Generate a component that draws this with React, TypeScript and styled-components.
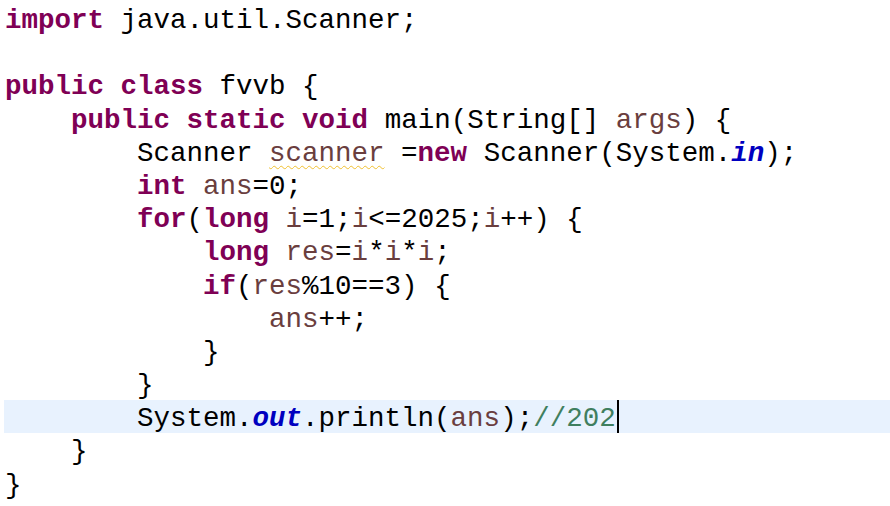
import React from "react";
import styled, { createGlobalStyle } from "styled-components";

const Global = createGlobalStyle`
  html, body { margin: 0; padding: 0; background: #ffffff; }
  body { width: 890px; height: 506px; overflow: hidden; }
`;

const Editor = styled.div`
  width: 890px;
  height: 506px;
  background: #ffffff;
  padding: 2px 0 0 4px;
  box-sizing: border-box;
  font-family: "Liberation Mono", "Courier New", monospace;
  font-size: 27.5px;
  color: #000000;
`;

const Line = styled.div<{ $current?: boolean }>`
  height: 33.2px;
  box-sizing: border-box;
  padding: 2px 0 0 1px;
  line-height: 33.2px;
  white-space: pre;
  background: ${(p) => (p.$current ? "#e8f2fe" : "transparent")};
`;

const Kw = styled.span`
  color: #7f0055;
  font-weight: bold;
`;

const Local = styled.span`
  color: #6a3e3e;
`;

const Field = styled.span`
  color: #0000c0;
  font-weight: bold;
  font-style: italic;
`;

const Comment = styled.span`
  color: #3f7f5f;
`;

const Warn = styled.span`
  color: #6a3e3e;
  text-decoration: underline wavy #f0c030;
  text-decoration-thickness: 1px;
  text-underline-offset: 4px;
`;

const Caret = styled.span`
  display: inline-block;
  position: relative;
  top: -2px;
  left: 1px;
  width: 2px;
  height: 33px;
  background: #000000;
  vertical-align: top;
`;

export default function App() {
  return (
    <>
      <Global />
      <Editor>
        <Line>
          <Kw>import</Kw> java.util.Scanner;
        </Line>
        <Line />
        <Line>
          <Kw>public</Kw> <Kw>class</Kw> fvvb {"{"}
        </Line>
        <Line>
          {"    "}
          <Kw>public</Kw> <Kw>static</Kw> <Kw>void</Kw> main(String[] <Local>args</Local>) {"{"}
        </Line>
        <Line>
          {"        "}Scanner <Warn>scanner</Warn> =<Kw>new</Kw> Scanner(System.<Field>in</Field>);
        </Line>
        <Line>
          {"        "}
          <Kw>int</Kw> <Local>ans</Local>=0;
        </Line>
        <Line>
          {"        "}
          <Kw>for</Kw>(<Kw>long</Kw> <Local>i</Local>=1;<Local>i</Local>&lt;=2025;<Local>i</Local>++) {"{"}
        </Line>
        <Line>
          {"            "}
          <Kw>long</Kw> <Local>res</Local>=<Local>i</Local>*<Local>i</Local>*<Local>i</Local>;
        </Line>
        <Line>
          {"            "}
          <Kw>if</Kw>(<Local>res</Local>%10==3) {"{"}
        </Line>
        <Line>
          {"                "}
          <Local>ans</Local>++;
        </Line>
        <Line>{"            }"}</Line>
        <Line>{"        }"}</Line>
        <Line $current>
          {"        "}System.<Field>out</Field>.println(<Local>ans</Local>);<Comment>//202</Comment>
          <Caret />
        </Line>
        <Line>{"    }"}</Line>
        <Line>{"}"}</Line>
      </Editor>
    </>
  );
}
